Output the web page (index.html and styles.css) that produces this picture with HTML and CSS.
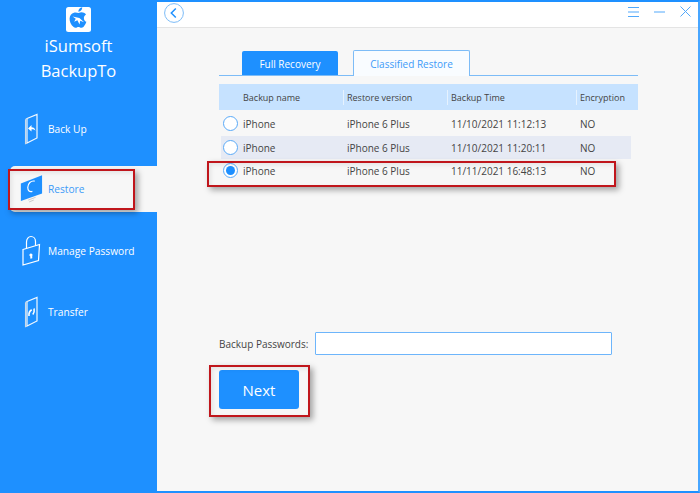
FILE: index.html
```html
<!DOCTYPE html>
<html lang="en">
<head>
    <meta charset="UTF-8">
    <title>iSumsoft BackupTo</title>
    <link rel="stylesheet" href="styles.css">
</head>
<body>
    <div class="window">
        <aside class="sidebar">
            <div class="brand">
                <svg class="logo" viewBox="0 0 25 25">
                    <rect width="25" height="25" rx="2.5" fill="#fff"/>
                    <g transform="translate(-2.300 -1.800) scale(1.180)">
                        <path d="M12.6 6.600c1.600-.9 3.200-.9 4.600-.2 .7 .4 1.300 .9 1.700 1.500-1.500 .9-2 2.300-1.700 3.700 .2 1.100 1 2 2 2.500-.5 1.600-1.400 3.200-2.500 4.300-.9 .8-1.900 .8-2.900 .4-.9-.4-1.700-.4-2.600 0-1 .4-2 .4-2.800-.4C6 16.500 4.900 13.900 5 11.200c.1-2.300 1.500-4.300 3.700-4.800 1.400-.3 2.700 0 3.900 .2z" fill="#1e90ff"/>
                        <path d="M12.400 5.600c0-2 1.300-3.400 3.300-3.800 .1 2-1.200 3.600-3.300 3.800z" fill="#1e90ff"/>
                        <path d="M7.500 9.500l5.800 1.300 4 3.700-3.300-1.400-.6 3.200-1.800-3.500-2.700 1.200 1.300-2.600z" fill="#fff"/>
                    </g>
                </svg>
                <div class="brand-name">iSumsoft<br>BackupTo</div>
            </div>
            <nav class="nav">
                <div class="nav-item">
                    <svg class="nav-icon" viewBox="0 0 24 32" fill="none" stroke="#f2f8ff" stroke-width="1.200">
                        <path d="M6 5.500L16 1.500V25L6 30z"/>
                        <path d="M4.600 6.500V30.500L6 30M4.600 6.500L6 5.500" stroke="#c9d9ea" stroke-width="1.300"/>
                        <path d="M7 15.500l3.500-3.500v2.200c2 0 3.500 1 4 3.500-1-1-2.500-1.500-4-1.400v2.200z" fill="#fff" stroke="none"/>
                    </svg>
                    <span>Back Up</span>
                </div>
                <div class="nav-item active">
                    <svg class="nav-icon restore-icon" viewBox="0 0 26 32">
                        <path d="M2 10L25 1V21L2 29z" fill="#1e90ff"/>
                        <path d="M17 7.500c-4-1-7.500 2.500-7.500 7 0 3.500 2 5 5 4" fill="none" stroke="#fff" stroke-width="1.300"/>
                        <path d="M10 28l8-3M11 30l5-2" stroke="#c8c8c8" stroke-width="1"/>
                    </svg>
                    <span>Restore</span>
                </div>
                <div class="nav-item">
                    <svg class="nav-icon" viewBox="0 0 24 32" fill="none" stroke="#fff" stroke-width="1.200">
                        <path d="M2 14.500L18.500 9.500 17.500 25.500 2 30z"/>
                        <path d="M5.500 13.500V7c0-3 2-5.500 4.500-5.500S14.500 3.500 14.500 6.500V10.700"/>
                        <path d="M9.200 21.300a1.500 1.500 0 1 1 2-.5l.1 2.400-1.900 .6z" fill="#fff" stroke="none"/>
                    </svg>
                    <span>Manage Password</span>
                </div>
                <div class="nav-item">
                    <svg class="nav-icon" viewBox="0 0 24 32" fill="none" stroke="#f2f8ff" stroke-width="1.200">
                        <path d="M6 5.500L16 1.500V25L6 30z"/>
                        <path d="M4.600 6.500V30.500L6 30M4.600 6.500L6 5.500" stroke="#c9d9ea" stroke-width="1.300"/>
                        <path d="M8 20c-.3-2.500 .7-5 2.700-6.200M11.800 18.500c1.300-1.500 1.700-3.500 1.300-6" stroke="#fff" stroke-width="1.600"/>
                    </svg>
                    <span>Transfer</span>
                </div>
            </nav>
        </aside>

        <main class="main">
            <header class="topbar">
                <svg class="back" viewBox="0 0 20 20" fill="none" stroke="#1e90ff">
                    <circle cx="10" cy="10" r="9.400" stroke="#7dbcf7" stroke-width="1"/>
                    <path d="M11.800 5.500L7.300 10l4.500 4.500" stroke-width="1.500"/>
                </svg>
                <div class="win-controls">
                    <svg class="win-menu" viewBox="0 0 11 10" stroke="#52a9fb" stroke-width="1"><path d="M0 .5h11M0 5h11M0 9.500h11"/></svg>
                    <svg class="win-min" viewBox="0 0 11 2" stroke="#52a9fb" stroke-width="1"><path d="M0 1h11"/></svg>
                    <svg class="win-close" viewBox="0 0 11 11" stroke="#52a9fb" stroke-width="1"><path d="M.5 .5l10 10M10.500 .5l-10 10"/></svg>
                </div>
            </header>

            <section class="content">
                <div class="tabs">
                    <div class="tab tab-full">Full Recovery</div>
                    <div class="tab tab-classified">Classified Restore</div>
                </div>

                <div class="table">
                    <div class="row head">
                        <div class="cell col-name">Backup name</div>
                        <div class="cell col-version">Restore version</div>
                        <div class="cell col-time">Backup Time</div>
                        <div class="cell col-enc">Encryption</div>
                    </div>
                    <div class="row row-a">
                        <span class="radio"></span>
                        <div class="cell col-name">iPhone</div>
                        <div class="cell col-version">iPhone 6 Plus</div>
                        <div class="cell col-time">11/10/2021 11:12:13</div>
                        <div class="cell col-enc">NO</div>
                    </div>
                    <div class="row row-b">
                        <span class="radio"></span>
                        <div class="cell col-name">iPhone</div>
                        <div class="cell col-version">iPhone 6 Plus</div>
                        <div class="cell col-time">11/10/2021 11:20:11</div>
                        <div class="cell col-enc">NO</div>
                    </div>
                    <div class="row row-c">
                        <span class="radio checked"></span>
                        <div class="cell col-name">iPhone</div>
                        <div class="cell col-version">iPhone 6 Plus</div>
                        <div class="cell col-time">11/11/2021 16:48:13</div>
                        <div class="cell col-enc">NO</div>
                    </div>
                </div>

                <div class="password">
                    <label for="backupPass">Backup Passwords:</label>
                    <input type="text" id="backupPass">
                </div>
                <button class="next">Next</button>
            </section>
        </main>

        <!-- red annotation boxes drawn over the screenshot -->
        <div class="mark mark-restore"></div>
        <div class="mark mark-row"></div>
        <div class="mark mark-next"></div>
    </div>
</body>
</html>
```

FILE: styles.css
```css
* {
    box-sizing: border-box;
}
body {
    margin: 0;
    font-family: "Open Sans", "Noto Sans", sans-serif;
    color: #444;
    background: #fff;
}
.window {
    position: relative;
    display: flex;
    width: 700px;
    height: 493px;
    overflow: hidden;
}
.sidebar {
    width: 157px;
    flex-shrink: 0;
    background: #1e90ff;
    color: #fff;
}
.brand {
    display: flex;
    flex-direction: column;
    align-items: center;
    padding-top: 7px;
    height: 107px;
}
.logo {
    width: 25px;
    height: 25px;
}
.brand-name {
    margin-top: 1px;
    font-size: 16.5px;
    line-height: 25px;
    text-align: center;
}
.nav {
    display: flex;
    flex-direction: column;
    gap: 18px;
    padding-left: 10px;
}
.nav-item {
    display: flex;
    align-items: center;
    gap: 3px;
    height: 43px;
    padding-left: 11px;
    font-size: 10.2px;
}
.nav-item.active {
    height: 46px;
    margin: -2px 0 -1px;
    background: #f7f7f7;
    color: #3d9bf8;
    border-radius: 5px 0 0 5px;
}
.nav-icon {
    width: 24px;
    height: 32px;
    flex-shrink: 0;
}
.restore-icon {
    margin-left: -2px;
    margin-right: 2px;
}
.main {
    flex: 1;
    display: flex;
    flex-direction: column;
    background: #f7f7f7;
    border-top: 2px solid #1e90ff;
    border-right: 2px solid #48a6ff;
    border-bottom: 2px solid #1e90ff;
}
.topbar {
    display: flex;
    align-items: center;
    justify-content: space-between;
    height: 26px;
    flex-shrink: 0;
    padding: 0 7px 4px 7px;
    background: #fff;
    border-bottom: 1px solid #e4e4e4;
}
.back {
    width: 20px;
    height: 20px;
}
.win-controls {
    display: flex;
    align-items: center;
    gap: 15px;
    padding-bottom: 2px;
}
.win-menu {
    width: 11px;
    height: 10px;
}
.win-min {
    width: 11px;
    height: 2px;
}
.win-close {
    width: 11px;
    height: 11px;
}
.content {
    flex: 1;
    padding: 22px 60px 0 62px;
}
.tabs {
    display: flex;
    align-items: flex-end;
    gap: 15px;
    height: 26px;
    padding-left: 23px;
    border-bottom: 1px solid #7dbcf7;
}
.tab {
    font-size: 10px;
    text-align: center;
    border-radius: 2px 2px 0 0;
}
.tab-full {
    width: 96px;
    height: 24px;
    line-height: 26px;
    background: #1e90ff;
    color: #fff;
}
.tab-classified {
    width: 117px;
    height: 26px;
    line-height: 27px;
    margin-bottom: -1px;
    background: #f9fcff;
    color: #3d9bf8;
    border: 1px solid #7dbcf7;
    border-bottom: none;
}
.table {
    margin-top: 8px;
    font-size: 10px;
}
.row {
    position: relative;
    display: flex;
    align-items: center;
}
.head {
    height: 26px;
    margin-bottom: 1px;
    background: #c6e2ff;
    font-size: 9px;
}
.head .col-version::before,
.head .col-time::before,
.head .col-enc::before {
    content: "";
    position: absolute;
    top: 6px;
    height: 15px;
    margin-left: -4px;
    border-left: 1px solid #e6f2fe;
}
.row-a {
    height: 25px;
}
.row-b {
    height: 23px;
    margin: 0 7px 0 2px;
    background: #e6eaf4;
}
.row-c {
    height: 24px;
}
.cell {
    white-space: nowrap;
}
.col-name {
    width: 104px;
    margin-left: 24px;
}
.row-b .col-name {
    margin-left: 22px;
}
.col-version {
    width: 104px;
}
.col-time {
    width: 129px;
}
.radio {
    position: absolute;
    left: 4px;
    top: 50%;
    width: 15px;
    height: 15px;
    margin-top: -8px;
    background: #fff;
    border: 1px solid #5aaaf8;
    border-radius: 50%;
}
.row-b .radio {
    left: 2px;
}
.radio.checked::after {
    content: "";
    display: block;
    width: 9px;
    height: 9px;
    margin: 2px;
    background: #1e90ff;
    border-radius: 50%;
}
.password {
    display: flex;
    align-items: center;
    gap: 7px;
    margin-top: 149px;
    font-size: 10px;
}
.password input {
    width: 297px;
    height: 23px;
    padding: 0 4px;
    background: #fff;
    border: 1px solid #6db5fb;
    border-radius: 1px;
    outline: none;
}
.next {
    display: block;
    width: 80px;
    height: 39px;
    margin-top: 15px;
    background: #1e90ff;
    color: #fff;
    border: none;
    border-radius: 3px;
    font-family: inherit;
    font-size: 15px;
}
.mark {
    position: absolute;
    border: 2px solid #c0161c;
    box-shadow: 3px 3px 6px rgba(0, 0, 0, 0.35), inset 2px 2px 4px rgba(0, 0, 0, 0.08);
}
.mark-restore {
    left: 8px;
    top: 169px;
    width: 127px;
    height: 41px;
}
.mark-row {
    left: 207px;
    top: 161px;
    width: 409px;
    height: 26px;
}
.mark-next {
    left: 209px;
    top: 365px;
    width: 101px;
    height: 52px;
}
```
